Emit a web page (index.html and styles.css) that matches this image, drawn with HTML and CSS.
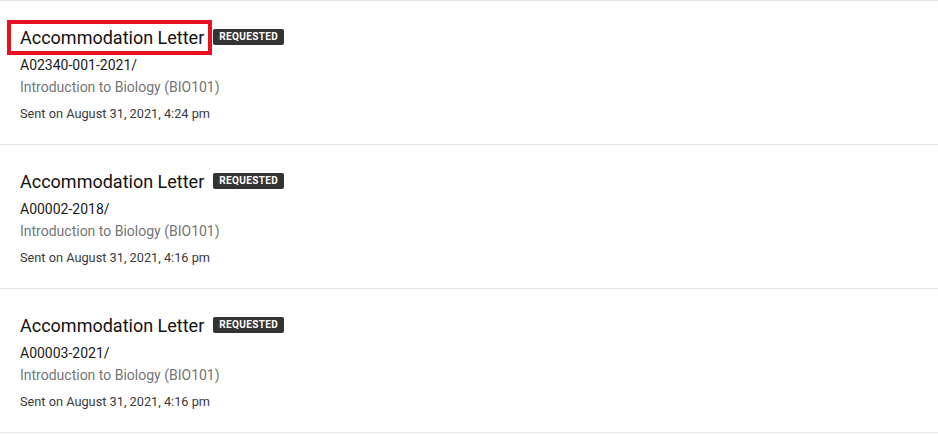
FILE: index.html
```html
<!DOCTYPE html>
<html lang="en">
<head>
<meta charset="utf-8">
<title>Letters</title>
<link rel="stylesheet" href="styles.css">
</head>
<body>
<ul class="letters">
  <li class="letter">
    <div class="letter-head">
      <span class="letter-title highlighted">Accommodation Letter</span>
      <span class="badge">REQUESTED</span>
    </div>
    <div class="letter-code">A02340-001-2021/</div>
    <div class="letter-course">Introduction to Biology (BIO101)</div>
    <div class="letter-date">Sent on August 31, 2021, 4:24 pm</div>
  </li>
  <li class="letter">
    <div class="letter-head">
      <span class="letter-title">Accommodation Letter</span>
      <span class="badge">REQUESTED</span>
    </div>
    <div class="letter-code">A00002-2018/</div>
    <div class="letter-course">Introduction to Biology (BIO101)</div>
    <div class="letter-date">Sent on August 31, 2021, 4:16 pm</div>
  </li>
  <li class="letter">
    <div class="letter-head">
      <span class="letter-title">Accommodation Letter</span>
      <span class="badge">REQUESTED</span>
    </div>
    <div class="letter-code">A00003-2021/</div>
    <div class="letter-course">Introduction to Biology (BIO101)</div>
    <div class="letter-date">Sent on August 31, 2021, 4:16 pm</div>
  </li>
</ul>
</body>
</html>
```

FILE: styles.css
```css
* { box-sizing: border-box; }
html, body {
  margin: 0;
  padding: 0;
  background: #fff;
}
body {
  font-family: Roboto, "Liberation Sans", Arial, sans-serif;
  color: #212121;
}
.letters {
  list-style: none;
  margin: 0;
  padding: 0;
  border-bottom: 1px solid #e6e6e6;
}
.letter {
  height: 144px;
  border-top: 1px solid #e6e6e6;
  padding: 25px 20px 0 20px;
}
.letter-head {
  display: flex;
  align-items: center;
  gap: 9px;
  height: 24px;
}
.letter-title {
  position: relative;
  font-size: 18px;
  line-height: 24px;
  color: #111;
}
.highlighted::after {
  content: "";
  position: absolute;
  left: -13px;
  right: -8px;
  top: -6px;
  bottom: -5px;
  border: 4px solid #e81123;
}
.badge {
  display: inline-block;
  margin-top: -2px;
  background: #333;
  color: #fff;
  font-size: 10px;
  font-weight: 700;
  line-height: 16px;
  height: 16px;
  padding: 0 6px;
  border-radius: 2px;
  letter-spacing: 0.35px;
}
.letter-code {
  margin-top: 4px;
  font-size: 14px;
  line-height: 22px;
  color: #212121;
}
.letter-course {
  font-size: 14px;
  line-height: 22px;
  color: #757575;
}
.letter-date {
  margin-top: 6px;
  font-size: 12.75px;
  line-height: 20px;
  color: #3a3a3a;
}
```
